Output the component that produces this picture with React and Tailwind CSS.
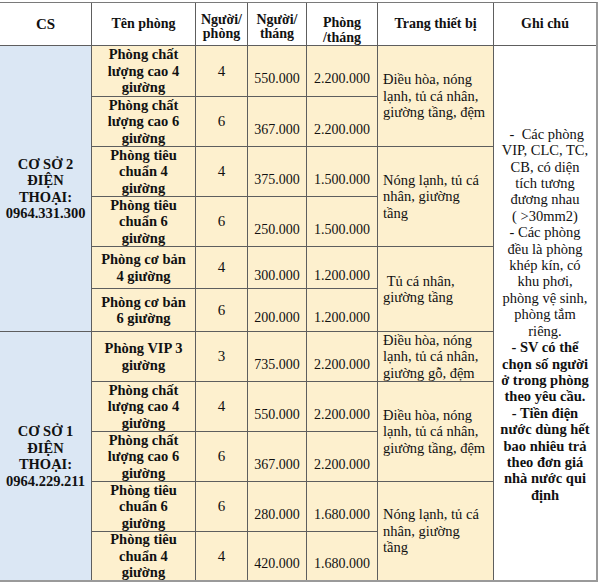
import React from 'react'

const serif = "font-['Liberation_Serif','Times_New_Roman',serif]"

const rows = [
  { name: ['Phòng chất', 'lượng cao 4', 'giường'], ppl: '4', month: '550.000', room: '2.200.000' },
  { name: ['Phòng chất', 'lượng cao 6', 'giường'], ppl: '6', month: '367.000', room: '2.200.000' },
  { name: ['Phòng tiêu', 'chuẩn 4', 'giường'], ppl: '4', month: '375.000', room: '1.500.000' },
  { name: ['Phòng tiêu', 'chuẩn 6', 'giường'], ppl: '6', month: '250.000', room: '1.500.000' },
  { name: ['Phòng cơ bản', '4 giường'], ppl: '4', month: '300.000', room: '1.200.000' },
  { name: ['Phòng cơ bản', '6 giường'], ppl: '6', month: '200.000', room: '1.200.000' },
  { name: ['Phòng VIP 3', 'giường'], ppl: '3', month: '735.000', room: '2.200.000' },
  { name: ['Phòng chất', 'lượng cao 4', 'giường'], ppl: '4', month: '550.000', room: '2.200.000' },
  { name: ['Phòng chất', 'lượng cao 6', 'giường'], ppl: '6', month: '367.000', room: '2.200.000' },
  { name: ['Phòng tiêu', 'chuẩn 6', 'giường'], ppl: '6', month: '280.000', room: '1.680.000' },
  { name: ['Phòng tiêu', 'chuẩn 4', 'giường'], ppl: '4', month: '420.000', room: '1.680.000' },
]

// equipment cells keyed by the row index where they start
const equipment = {
  0: { span: 'row-span-2', lines: ['Điều hòa, nóng', 'lạnh, tủ cá nhân,', 'giường tầng, đệm'] },
  2: { span: 'row-span-2', lines: ['Nóng lạnh, tủ cá', 'nhân, giường', 'tầng'] },
  4: { span: 'row-span-2', lines: ['\u00a0Tủ cá nhân,', 'giường tầng'] },
  6: { span: 'row-span-1', lines: ['Điều hòa, nóng', 'lạnh, tủ cá nhân,', 'giường gỗ, đệm'] },
  7: { span: 'row-span-2', lines: ['Điều hòa, nóng', 'lạnh, tủ cá nhân,', 'giường tầng, đệm'] },
  9: { span: 'row-span-2', lines: ['Nóng lạnh, tủ cá', 'nhân, giường', 'tầng'] },
}

const noteRegular = [
  '\u00a0-\u00a0 Các phòng',
  'VIP, CLC, TC,',
  'CB, có diện',
  'tích tương',
  'đương nhau',
  '( >30mm2)',
  '- Các phòng',
  'đều là phòng',
  'khép kín, có',
  'khu phơi,',
  'phòng vệ sinh,',
  'phòng tắm',
  'riêng.',
]

const noteBold = [
  '- SV có thể',
  'chọn số người',
  'ở trong phòng',
  'theo yêu cầu.',
  '- Tiền điện',
  'nước dùng hết',
  'bao nhiêu trả',
  'theo đơn giá',
  'nhà nước qui',
  'định',
]

const Lines = ({ lines }) => lines.map((l, i) => (
  <span key={i} className="block whitespace-nowrap">{l}</span>
))

const Header = ({ children, className = '' }) => (
  <div className={`bg-white flex items-center justify-center text-center font-bold text-[14px] leading-[14px] ${className}`}>
    <div>{children}</div>
  </div>
)

const Campus = ({ span, lines }) => (
  <div className={`${span} bg-[#dbe7f4] flex items-center justify-center text-center font-bold text-[14.5px] leading-[16.5px]`}>
    <div><Lines lines={lines} /></div>
  </div>
)

const App = () => {
  return (
    <div className={`w-[599px] h-[586px] bg-white pt-[2px] text-[#111] ${serif}`}>
      <div className="w-[598px] grid grid-cols-[91px_103px_51px_58px_70px_115px_102px] grid-rows-[42px_50px_49px_49px_49px_41px_42px_49px_49px_49px_49px_48px] gap-px bg-[#5e5e5e] border-t border-t-[#7a7a7a] border-r-2 border-r-[#9a9a9a] border-b-2 border-b-[#9a9a9a]">
        <Header className="text-[15px]">CS</Header>
        <Header>Tên phòng</Header>
        <Header className="pt-[5px]">Người/<br />phòng</Header>
        <Header className="pt-[5px]">Người/<br />tháng</Header>
        <Header className="pt-[11px] leading-[15px]">Phòng<br />/tháng</Header>
        <Header>Trang thiết bị</Header>
        <Header>Ghi chú</Header>

        {rows.map((r, i) => (
          <React.Fragment key={i}>
            {i === 0 && <Campus span="row-span-6" lines={['CƠ SỞ 2', 'ĐIỆN', 'THOẠI:', '0964.331.300']} />}
            {i === 6 && <Campus span="row-span-5" lines={['CƠ SỞ 1', 'ĐIỆN', 'THOẠI:', '0964.229.211']} />}
            <div className="bg-[#fdf0ce] flex items-center justify-center text-center font-bold text-[14.5px] leading-[16.5px]">
              <div><Lines lines={r.name} /></div>
            </div>
            <div className="bg-[#fdf0ce] flex items-center justify-center text-[15px]">{r.ppl}</div>
            <div className="bg-[#fdf0ce] flex items-center justify-center pt-[15px] text-[14px]">{r.month}</div>
            <div className="bg-[#fdf0ce] flex items-center justify-center pt-[15px] text-[14px]">{r.room}</div>
            {equipment[i] && (
              <div className={`${equipment[i].span} bg-[#fdf0ce] flex items-center pl-[5px] text-[14.5px] leading-[16.5px]`}>
                <div><Lines lines={equipment[i].lines} /></div>
              </div>
            )}
            {i === 0 && (
              <div className="row-span-11 bg-white flex items-center justify-center text-center text-[14.5px] leading-[16.4px] pt-[3px]">
                <div>
                  <Lines lines={noteRegular} />
                  <div className="font-bold"><Lines lines={noteBold} /></div>
                </div>
              </div>
            )}
          </React.Fragment>
        ))}
      </div>
    </div>
  )
}

export default App
